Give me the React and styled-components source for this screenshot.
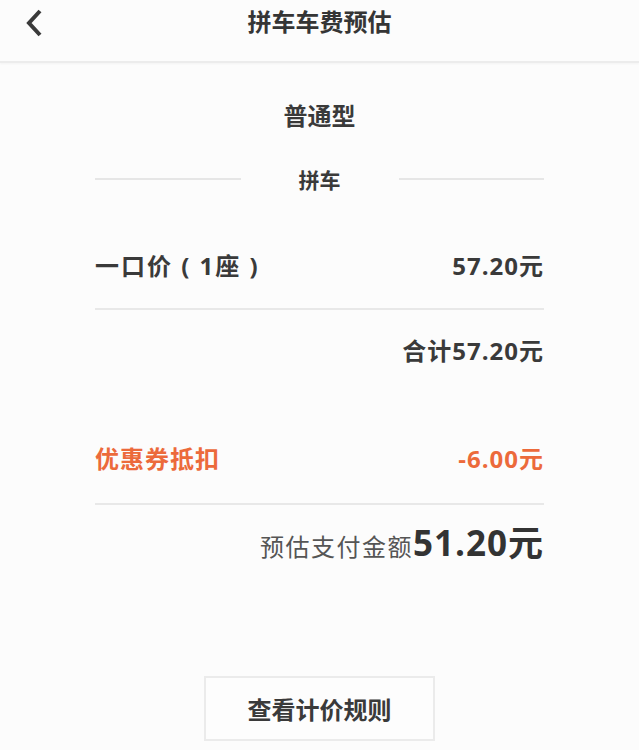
import React from "react";
import styled, { createGlobalStyle } from "styled-components";

const Global = createGlobalStyle`
  html, body { margin: 0; padding: 0; background: #fcfcfc; }
  body { font-family: "Open Sans", "Noto Sans CJK SC", sans-serif; color: #3a3a3a; }
`;

const Page = styled.div`
  width: 639px;
  min-height: 750px;
  background: #fcfcfc;
  display: flex;
  flex-direction: column;
`;

const Header = styled.header`
  height: 61px;
  display: flex;
  align-items: center;
  justify-content: center;
  position: relative;
  border-bottom: 2px solid #ececec;
  box-shadow: 0 1px 2px rgba(0,0,0,0.04);
`;

const Back = styled.button`
  position: absolute;
  left: 22px;
  top: 6px;
  width: 26px;
  height: 34px;
  border: 0;
  padding: 0;
  background: none;
  display: flex;
  align-items: center;
  justify-content: center;
`;

const Title = styled.h1`
  margin: 0 0 20px;
  font-family: "Noto Sans CJK SC", sans-serif;
  font-size: 24px;
  font-weight: 700;
  color: #353535;
  line-height: 1;
`;

const Body = styled.main`
  display: flex;
  flex-direction: column;
  padding: 0 95px;
`;

const CarType = styled.div`
  margin-top: 38px;
  text-align: center;
  font-family: "Noto Sans CJK SC", sans-serif;
  font-size: 24px;
  font-weight: 700;
  line-height: 28px;
  color: #3a3a3a;
`;

const Section = styled.div`
  margin-top: 38px;
  display: flex;
  align-items: center;
  gap: 58px;
  font-family: "Noto Sans CJK SC", sans-serif;
  font-size: 21px;
  font-weight: 700;
  line-height: 24px;
  &::before, &::after {
    content: "";
    flex: 1;
    height: 2px;
    background: #e6e6e6;
  }
`;

const Row = styled.div`
  display: flex;
  justify-content: ${(p) => (p.$end ? "flex-end" : "space-between")};
  align-items: baseline;
  font-size: 24px;
  letter-spacing: 1px;
  font-weight: 700;
  line-height: 28px;
  color: ${(p) => (p.$accent ? "#ec6a3b" : "#3a3a3a")};
  margin-top: ${(p) => p.$mt}px;
  padding-bottom: ${(p) => p.$pb || 0}px;
  border-bottom: ${(p) => (p.$line ? "2px solid #e8e8e8" : "none")};
`;

const Seat = styled.span`
  letter-spacing: 2px;
  white-space: pre;
`;

const Label = styled.span`
  font-weight: 400;
  font-size: 24px;
  letter-spacing: 1.5px;
  color: #555;
`;

const Big = styled.span`
  font-size: 35px;
  letter-spacing: 1px;
  font-weight: 700;
  color: #333;
`;

const Footer = styled.div`
  display: flex;
  justify-content: center;
  margin-top: 115px;
`;

const RuleButton = styled.button`
  width: 231px;
  height: 65px;
  border: 2px solid #ebebeb;
  background: #fdfdfd;
  font-family: "Noto Sans CJK SC", sans-serif;
  font-size: 24px;
  font-weight: 700;
  color: #3a3a3a;
`;

export default function App() {
  return (
    <Page>
      <Global />
      <Header>
        <Back aria-label="返回">
          <svg width="20" height="30" viewBox="0 0 20 30">
            <path d="M15 3 L4 15 L15 27" fill="none" stroke="#3a3a3a" strokeWidth="4" strokeLinecap="butt" strokeLinejoin="miter" />
          </svg>
        </Back>
        <Title>拼车车费预估</Title>
      </Header>
      <Body>
        <CarType>普通型</CarType>
        <Section>拼车</Section>
        <Row $mt={61} $pb={28} $line>
          <Seat>一口价 ( 1座 )</Seat>
          <span>57.20元</span>
        </Row>
        <Row $end $mt={27}>
          <span>合计57.20元</span>
        </Row>
        <Row $accent $mt={80} $pb={30} $line>
          <span>优惠券抵扣</span>
          <span>-6.00元</span>
        </Row>
        <Row $end $mt={24}>
          <Label>预估支付金额</Label>
          <Big>51.20元</Big>
        </Row>
        <Footer>
          <RuleButton>查看计价规则</RuleButton>
        </Footer>
      </Body>
    </Page>
  );
}
